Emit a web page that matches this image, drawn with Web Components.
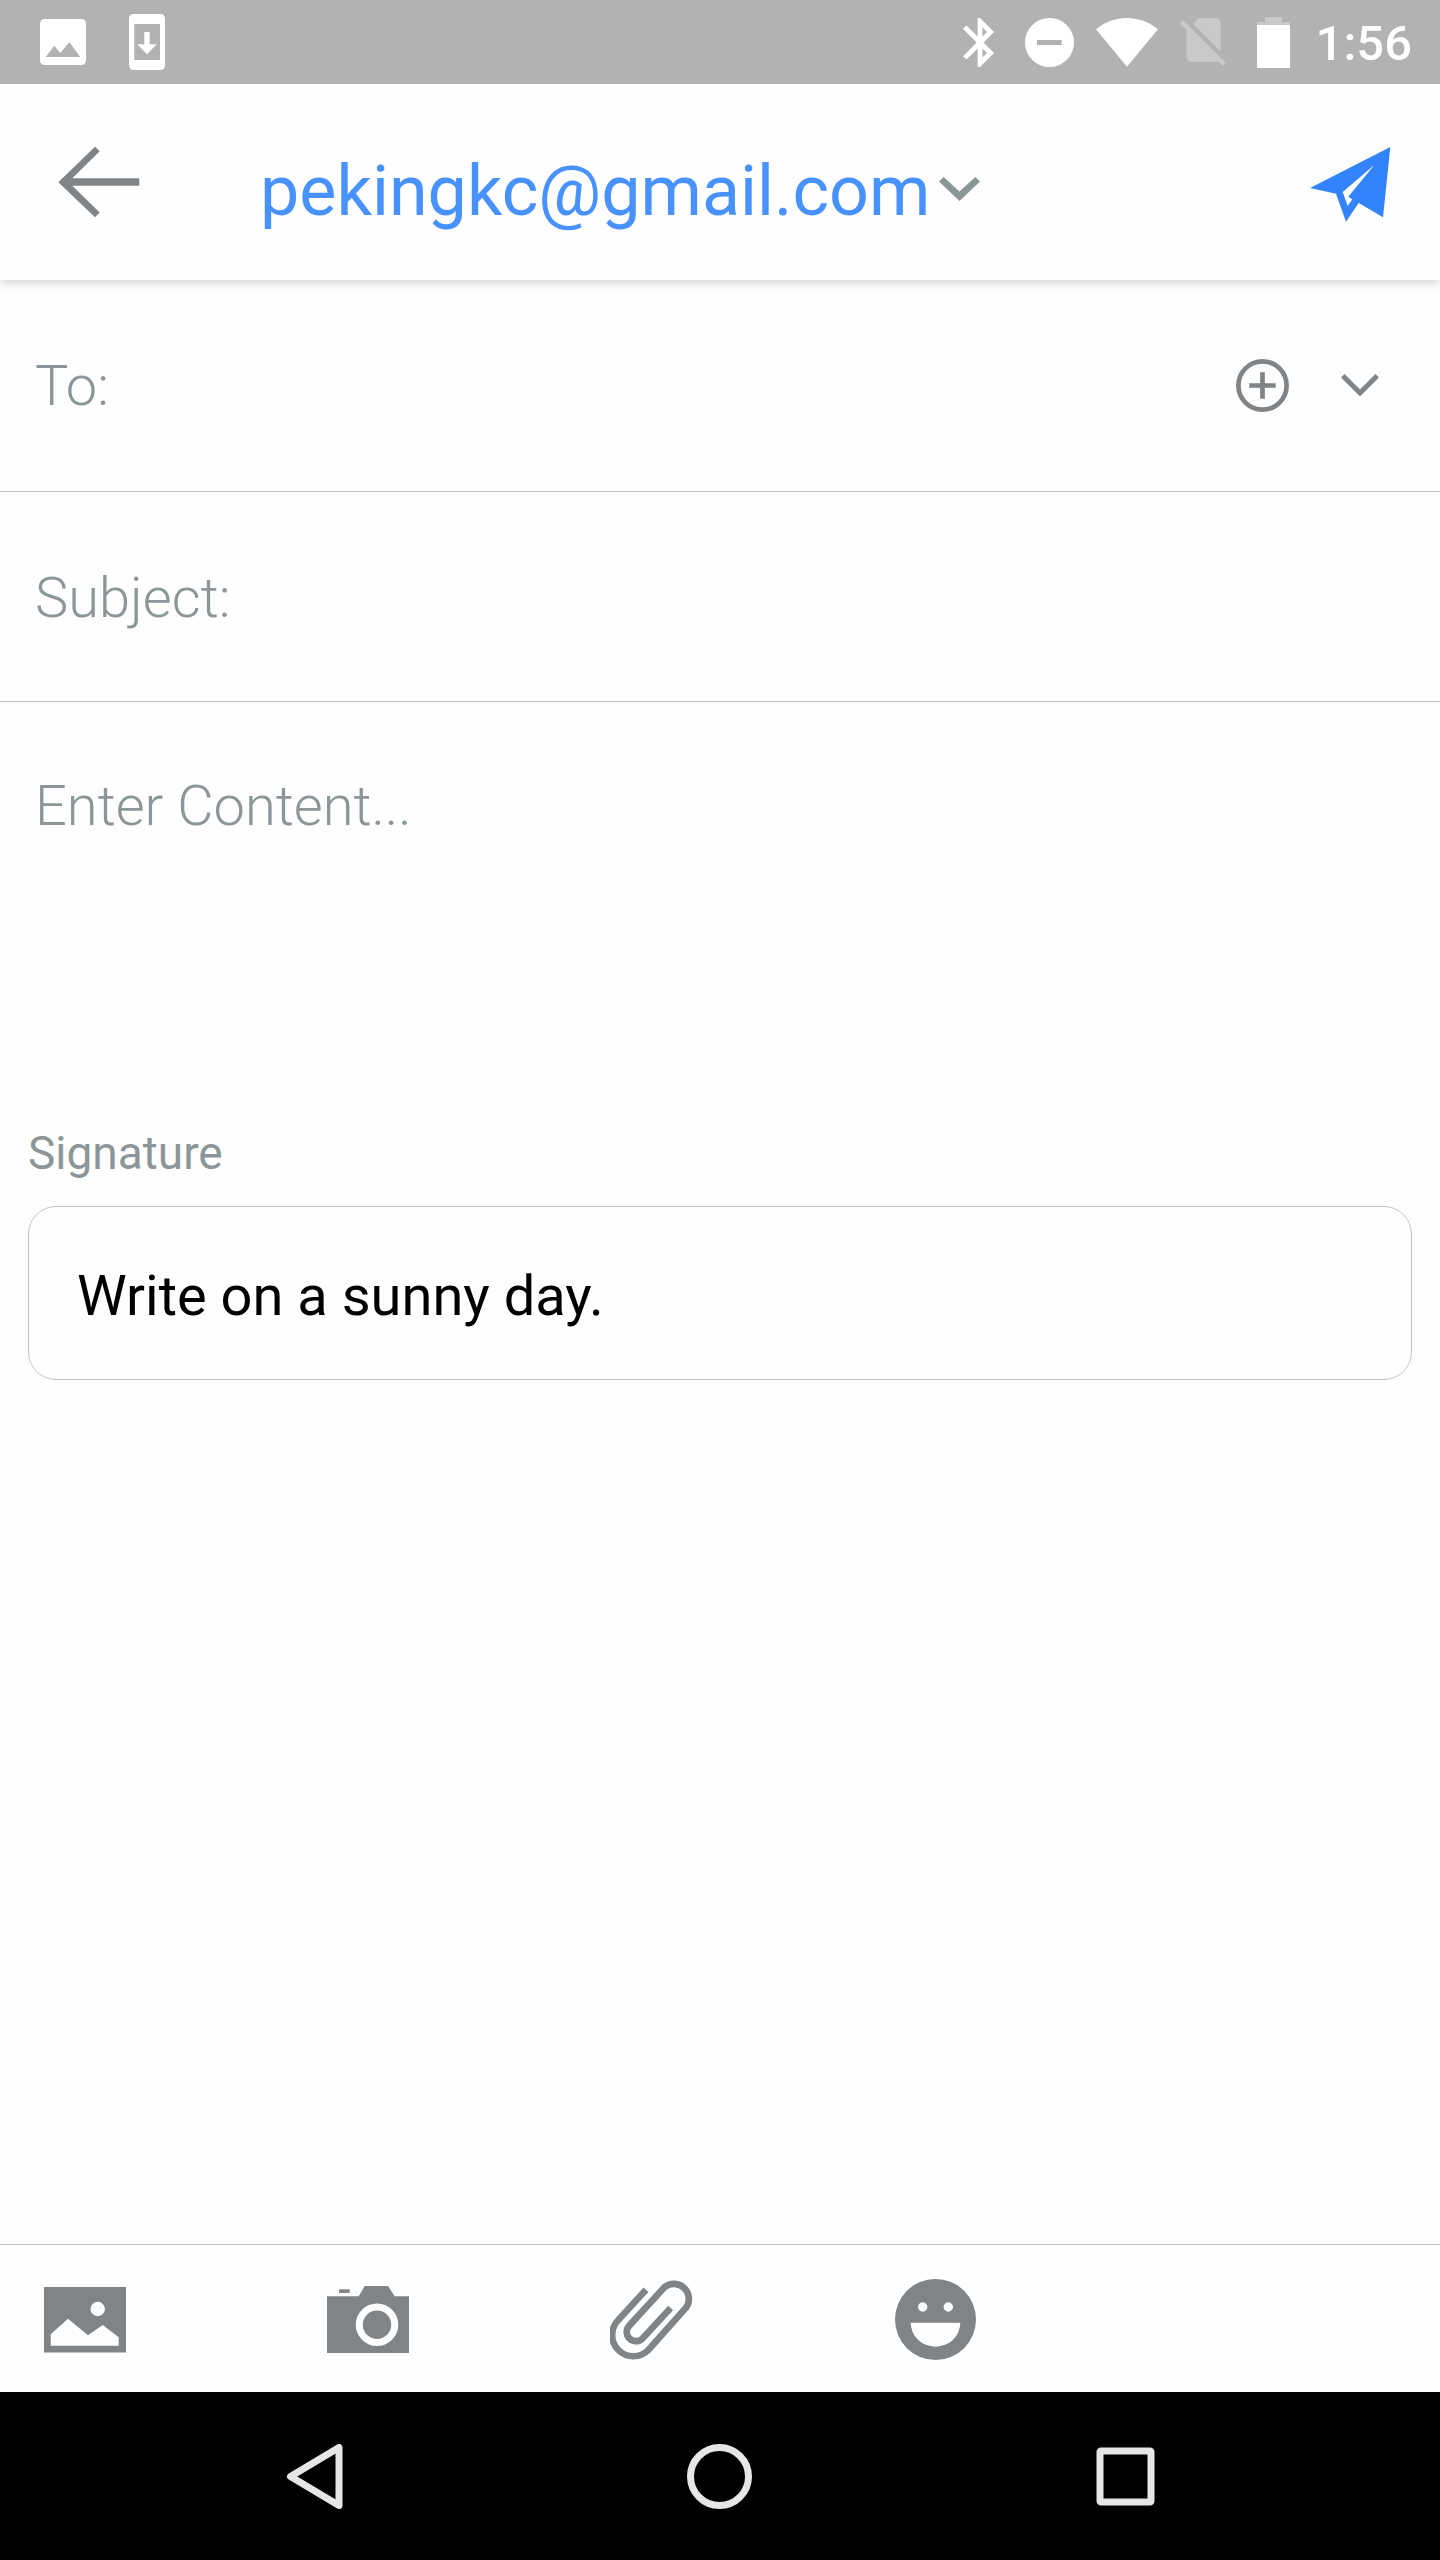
<!DOCTYPE html>
<html lang="en">
<head>
<meta charset="utf-8">
<meta name="viewport" content="width=device-width, initial-scale=1">
<title>Compose mail</title>
<style>
  html, body { margin: 0; }
  body {
    --ink: #000;
    --muted: #8c9699;
    --icon: #808486;
    --line: #bcc6ca;
    --blue: #3383ff;
    --paper: #fefefe;
    background: var(--paper);
    color: var(--ink);
    font-family: Roboto, "Liberation Sans", sans-serif;
  }
</style>
</head>
<body>
<mail-composer></mail-composer>

<script>
const define = (name, html, setup) => {
  const template = document.createElement('template');
  template.innerHTML = `<style>
    *, *::before, *::after { box-sizing: border-box; }
    :host { box-sizing: border-box; }
    button, input, textarea, select { font: inherit; color: inherit; background: none; border: 0; margin: 0; padding: 0; outline: 0; border-radius: 0; }
    button { display: flex; align-items: center; justify-content: center; cursor: pointer; }
  </style>` + html;
  customElements.define(name, class extends HTMLElement {
    constructor() {
      super();
      this.attachShadow({ mode: 'open' }).append(template.content.cloneNode(true));
    }
    connectedCallback() { if (setup) setup(this, this.shadowRoot); }
  });
};

/* name: [width, height, viewBox, markup] */
const ICONS = {
  picture: [46, 46, '0 0 46 46', '<path fill-rule="evenodd" d="M5 0H41Q46 0 46 5V41Q46 46 41 46H5Q0 46 0 41V5Q0 0 5 0ZM5.7 38H40.3L29.3 23 20.3 34 14.3 26.7Z"/>'],
  download: [36, 56, '0 0 36 56', '<path fill-rule="evenodd" d="M5 0H31Q36 0 36 5V51Q36 56 31 56H5Q0 56 0 51V5Q0 0 5 0ZM5.3 10V46H31V10ZM15.3 18H20.7V30.3H27.7L18 40.3 8.3 30.3H15.3Z"/>'],
  bluetooth: [31, 49, '5 2 12.71 20', '<path d="M17.71 7.71L12 2h-1v7.59L6.41 5 5 6.41 10.59 12 5 17.59 6.41 19 11 14.41V22h1l5.71-5.71-4.3-4.29 4.3-4.29zM13 5.83l1.88 1.88L13 9.59V5.83zm1.88 10.46L13 18.17v-3.76l1.88 1.88z"/>'],
  quiet: [49, 49, '0 0 49 49', '<path fill-rule="evenodd" d="M24.5 0A24.5 24.5 0 0 1 24.5 49A24.5 24.5 0 0 1 24.5 0ZM12 22V27H36.7V22Z"/>'],
  wifi: [62, 49, '0 0 62 49', '<path d="M31 48.7 0 11.3A48 48 0 0 1 62 11.3Z"/>'],
  nosim: [46, 48, '2.38 3 18.74 19.62', '<path opacity=".3" d="M18.99 5c0-1.1-.89-2-1.99-2h-7L7.66 5.34 19 16.68 18.99 5zM3.65 3.88L2.38 5.15 5 7.77V19c0 1.1.9 2 2 2h10.01c.35 0 .67-.1.96-.26l1.88 1.88 1.27-1.27L3.65 3.88z"/>'],
  battery: [33, 51, '0 0 33 51', '<path opacity=".3" d="M8 0H25V5H33V8H0V5H8Z"/><path d="M0 8H33V51H0Z"/>'],
  back: [82, 72, '0 0 82 72', '<path d="M.3 36.3 37 .7 41.7 5.3 14.3 32.3H81.3V39.7H14.3L41.7 66.5 37 71.3Z"/>'],
  caret: [41, 24, '0 0 41 24', '<path d="M0 4.5 4.7 0 20.5 14.5 36.3 0 41 4.5 20.5 24Z"/>'],
  send: [81, 75, '0 0 81 75', '<path fill-rule="evenodd" d="M80.3 0 73 70.3 48.7 56 36 74.7 26 46.7 0 41ZM64.3 18 32.7 45 37.7 59 42.3 52.3 38.3 49.7Z"/>'],
  plus: [53, 53, '0 0 53 53', '<g fill="none" stroke="currentColor" stroke-width="4.7"><circle cx="26.5" cy="26.5" r="24.1"/><path d="M13.3 26.5H39.7M26.5 13.3V39.7"/></g>'],
  chevron: [38, 23, '0 0 38 23', '<path fill="none" stroke="currentColor" stroke-width="5" d="M1.8 1.8 19 19 36.2 1.8"/>'],
  photo: [82, 66, '0 0 82 66', '<path fill-rule="evenodd" d="M0 0H82V65.5H0ZM6.7 47.3V58.7H74.7V50.3L58.7 38 44 48.3 24 31.7ZM46.5 22A7.2 7.2 0 0 0 60.9 22A7.2 7.2 0 0 0 46.5 22Z"/>'],
  camera: [82, 67, '0 0 82 67', '<path fill-rule="evenodd" d="M0 10.3H31.7L37.7 0H61L67.7 10.3H82V67H0ZM28.7 38.7A21.3 21.3 0 0 0 71.3 38.7A21.3 21.3 0 0 0 28.7 38.7Z"/><circle cx="50" cy="38.7" r="14.2"/><path d="M12 3.3H22.7V7H12Z"/>'],
  clip: [84, 81, '90 176 252 243', '<path fill="none" stroke="currentColor" stroke-width="20" d="M198 208 115 299A63 63 0 0 0 205 389L318 262A45 45 0 0 0 254 200L148.5 315A27 27 0 0 0 187.5 354.6L272 263"/>'],
  smile: [81, 81, '0 0 81 81', '<path fill-rule="evenodd" d="M40.5 0A40.5 40.5 0 0 1 40.5 81A40.5 40.5 0 0 1 40.5 0ZM15.7 43.7A24.8 24 0 0 0 65.3 43.7ZM23 28A4.7 4.7 0 0 0 32.4 28A4.7 4.7 0 0 0 23 28ZM48.6 28A4.7 4.7 0 0 0 58 28A4.7 4.7 0 0 0 48.6 28Z"/>'],
  navback: [65, 65, '0 0 65 65', '<path fill="none" stroke="currentColor" stroke-width="7" stroke-linejoin="round" d="M57 3.5V61.5L8.5 32.5Z"/>'],
  navhome: [65, 65, '0 0 65 65', '<circle cx="32.5" cy="32.5" r="29" fill="none" stroke="currentColor" stroke-width="7"/>'],
  navrecent: [65, 65, '0 0 65 65', '<rect x="7" y="7" width="51" height="51" rx="1" fill="none" stroke="currentColor" stroke-width="7"/>']
};

define('app-icon', `<style>:host { display: block; flex: none; } span, svg { display: block; }</style><span></span>`, (host, root) => {
  const [w, h, box, markup] = ICONS[host.getAttribute('name')];
  root.querySelector('span').innerHTML =
    `<svg width="${w}" height="${h}" viewBox="${box}" fill="currentColor" aria-hidden="true">${markup}</svg>`;
});

define('status-bar', `<style>
  :host { display: flex; align-items: center; justify-content: space-between; height: 84px; padding: 0 28px 0 40px; background: #b2b2b2; color: #fff; position: relative; z-index: 2; }
  div { display: flex; align-items: center; }
  .notices { gap: 43px; }
  .system { gap: 31px; }
  .radio { gap: 22px; }
  .power { gap: 26px; }
  time { font-size: 49px; line-height: 58px; font-weight: 500; padding-top: 4px; }
</style>
<div class="notices"><app-icon name="picture"></app-icon><app-icon name="download"></app-icon></div>
<div class="system">
  <app-icon name="bluetooth"></app-icon>
  <div class="radio"><app-icon name="quiet"></app-icon><app-icon name="wifi"></app-icon><app-icon name="nosim"></app-icon></div>
  <div class="power"><app-icon name="battery"></app-icon><time>1:56</time></div>
</div>`);

define('compose-header', `<style>
  :host { display: flex; align-items: center; height: 196px; padding: 0 49px 0 58px; background: var(--paper); box-shadow: 0 4px 8px rgba(0, 0, 0, .15); position: relative; z-index: 1; }
  .account { display: flex; align-items: center; gap: 8px; flex: 1; margin-left: 120px; color: #4892ff; }
  select { appearance: none; font-size: 70px; line-height: 82px; height: 82px; margin-top: 18px; cursor: pointer; }
  .account app-icon { color: var(--muted); margin-top: 14px; pointer-events: none; }
  .back { color: var(--icon); }
  .send { color: var(--blue); padding-top: 4px; }
</style>
<button class="back" aria-label="Back"><app-icon name="back"></app-icon></button>
<div class="account">
  <select aria-label="From"><option>pekingkc@gmail.com</option></select>
  <app-icon name="caret"></app-icon>
</div>
<button class="send" aria-label="Send"><app-icon name="send"></app-icon></button>`);

define('compose-field', `<style>
  :host { display: flex; align-items: center; min-height: 210px; padding: 0 61px 0 35px; border-bottom: 1px solid var(--line); color: var(--muted); font-size: 56px; line-height: 66px; font-weight: 300; }
  input { flex: 1; min-width: 0; height: 66px; margin-left: 16px; color: var(--ink); }
</style>
<label for="value"></label><input id="value" type="text"><slot></slot>`, (host, root) => {
  root.querySelector('label').textContent = host.getAttribute('label');
});

define('message-body', `<style>
  :host { display: block; font-size: 56px; line-height: 66px; font-weight: 300; }
  textarea { display: block; width: 100%; height: 424px; padding: 71px 35px 0; resize: none; }
  textarea::placeholder { color: var(--muted); opacity: 1; }
</style>
<textarea aria-label="Message" placeholder="Enter Content..."></textarea>`);

define('signature-card', `<style>
  :host { display: flex; flex-direction: column; gap: 26px; padding: 0 28px; }
  label { font-size: 46px; line-height: 54px; color: var(--muted); }
  input { width: 100%; height: 174px; padding: 6px 48px 0; border: 1px solid var(--line); border-radius: 28px; font-size: 56px; line-height: 66px; }
</style>
<label for="signature">Signature</label>
<input id="signature" type="text" value="Write on a sunny day.">`);

define('attachment-bar', `<style>
  :host { display: flex; align-items: center; gap: 201px; height: 148px; padding: 2px 44px 0; border-top: 1px solid var(--line); color: var(--icon); }
</style>
<button aria-label="Attach picture"><app-icon name="photo"></app-icon></button>
<button aria-label="Take photo"><app-icon name="camera"></app-icon></button>
<button aria-label="Attach file"><app-icon name="clip"></app-icon></button>
<button aria-label="Insert emoji"><app-icon name="smile"></app-icon></button>`);

define('system-nav', `<style>
  :host { display: grid; grid-template-columns: repeat(3, 1fr); height: 168px; padding: 0 112px; background: #000; color: #e6e6e6; }
</style>
<button aria-label="Back"><app-icon name="navback"></app-icon></button>
<button aria-label="Home"><app-icon name="navhome"></app-icon></button>
<button aria-label="Recent apps"><app-icon name="navrecent"></app-icon></button>`);

define('mail-composer', `<style>
  :host { display: flex; flex-direction: column; min-height: 100vh; }
  main { flex: 1; }
  .to { min-height: 212px; }
  .subject { padding-top: 2px; }
  .tools { display: flex; align-items: center; gap: 52px; color: var(--icon); }
</style>
<status-bar></status-bar>
<compose-header></compose-header>
<main>
  <compose-field class="to" label="To:">
    <div class="tools">
      <button aria-label="Add recipient"><app-icon name="plus"></app-icon></button>
      <button aria-label="Show Cc and Bcc"><app-icon name="chevron"></app-icon></button>
    </div>
  </compose-field>
  <compose-field class="subject" label="Subject:"></compose-field>
  <message-body></message-body>
  <signature-card></signature-card>
</main>
<attachment-bar></attachment-bar>
<system-nav></system-nav>`);
</script>
</body>
</html>
